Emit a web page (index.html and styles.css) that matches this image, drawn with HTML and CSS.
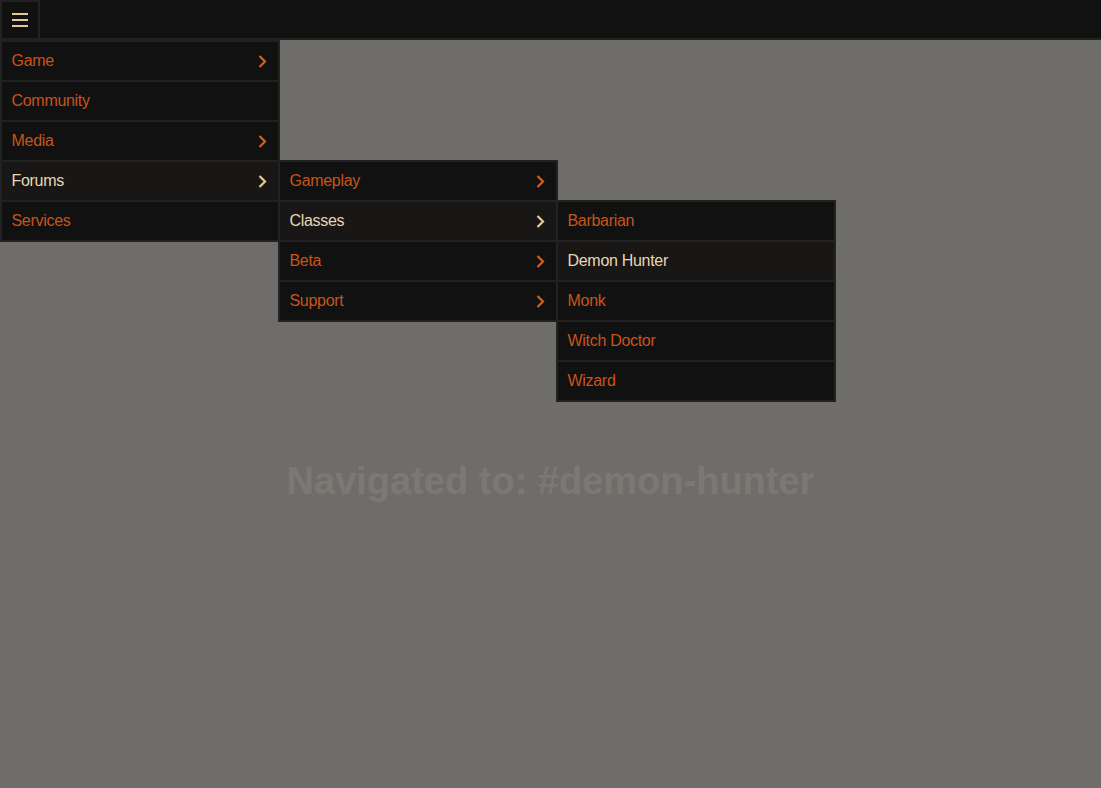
FILE: index.html
```html
<!DOCTYPE html>
<html lang="en">
<head>
<meta charset="utf-8">
<title>Menu</title>
<link rel="stylesheet" href="styles.css">
</head>
<body>
<header class="topbar">
  <button class="menu-btn" aria-label="Menu">
    <svg width="16" height="14" viewBox="0 0 16 14"><rect x="0" y="0" width="16" height="2"/><rect x="0" y="6" width="16" height="2"/><rect x="0" y="12" width="16" height="2"/></svg>
  </button>
</header>
<nav class="menu">
  <ul class="menu-list">
    <li class="item"><span>Game</span><svg class="chev" viewBox="0 0 9 13"><path d="M1.5 1 L7 6.5 L1.5 12"/></svg></li>
    <li class="item"><span>Community</span></li>
    <li class="item"><span>Media</span><svg class="chev" viewBox="0 0 9 13"><path d="M1.5 1 L7 6.5 L1.5 12"/></svg></li>
    <li class="item active"><span>Forums</span><svg class="chev" viewBox="0 0 9 13"><path d="M1.5 1 L7 6.5 L1.5 12"/></svg>
      <ul class="menu-list sub">
        <li class="item"><span>Gameplay</span><svg class="chev" viewBox="0 0 9 13"><path d="M1.5 1 L7 6.5 L1.5 12"/></svg></li>
        <li class="item active"><span>Classes</span><svg class="chev" viewBox="0 0 9 13"><path d="M1.5 1 L7 6.5 L1.5 12"/></svg>
          <ul class="menu-list sub">
            <li class="item"><span>Barbarian</span></li>
            <li class="item active"><span>Demon Hunter</span></li>
            <li class="item"><span>Monk</span></li>
            <li class="item"><span>Witch Doctor</span></li>
            <li class="item"><span>Wizard</span></li>
          </ul>
        </li>
        <li class="item"><span>Beta</span><svg class="chev" viewBox="0 0 9 13"><path d="M1.5 1 L7 6.5 L1.5 12"/></svg></li>
        <li class="item"><span>Support</span><svg class="chev" viewBox="0 0 9 13"><path d="M1.5 1 L7 6.5 L1.5 12"/></svg></li>
      </ul>
    </li>
    <li class="item"><span>Services</span></li>
  </ul>
</nav>
<main class="content">
  <h1 class="nav-title">Navigated to: #demon-hunter</h1>
</main>
</body>
</html>
```

FILE: styles.css
```css
* { box-sizing: border-box; }
html, body { margin: 0; padding: 0; }
body {
  background: #6e6d6a;
  font-family: "Liberation Sans", Arial, sans-serif;
  height: 788px;
  overflow: hidden;
}
.topbar {
  height: 40px;
  background: #111;
  border-bottom: 2px solid #222;
  display: flex;
}
.menu-btn {
  width: 40px;
  height: 40px;
  background: #111;
  border: 2px solid #222;
  padding: 0;
  margin: 0;
  display: flex;
  align-items: center;
  justify-content: center;
  flex-shrink: 0;
}
.menu-btn svg { fill: #e6c896; display: block; }
.menu { position: absolute; top: 40px; left: 0; z-index: 5; }
.menu-list {
  list-style: none;
  margin: 0;
  padding: 2px;
  width: 280px;
  background: #222;
  display: flex;
  flex-direction: column;
  gap: 2px;
}
.item {
  position: relative;
  height: 38px;
  background: #111;
  color: #c8541a;
  font-size: 16px;
  letter-spacing: -0.3px;
  display: flex;
  align-items: center;
  justify-content: space-between;
  padding: 0 11px 0 9.5px;
}
.item.active { background: #191715; color: #e8d6b4; }
.chev {
  width: 9px;
  height: 13px;
  fill: none;
  stroke: #d2601f;
  stroke-width: 2.2;
}
.item.active > .chev { stroke: #e6c896; }
.sub {
  position: absolute;
  left: 100%;
  top: -2px;
}
.content {
  height: 748px;
  display: flex;
  justify-content: center;
  padding-top: 419px;
}
.nav-title {
  margin: 0;
  font-size: 38px;
  line-height: 44px;
  font-weight: bold;
  color: #7c7975;
}
```
